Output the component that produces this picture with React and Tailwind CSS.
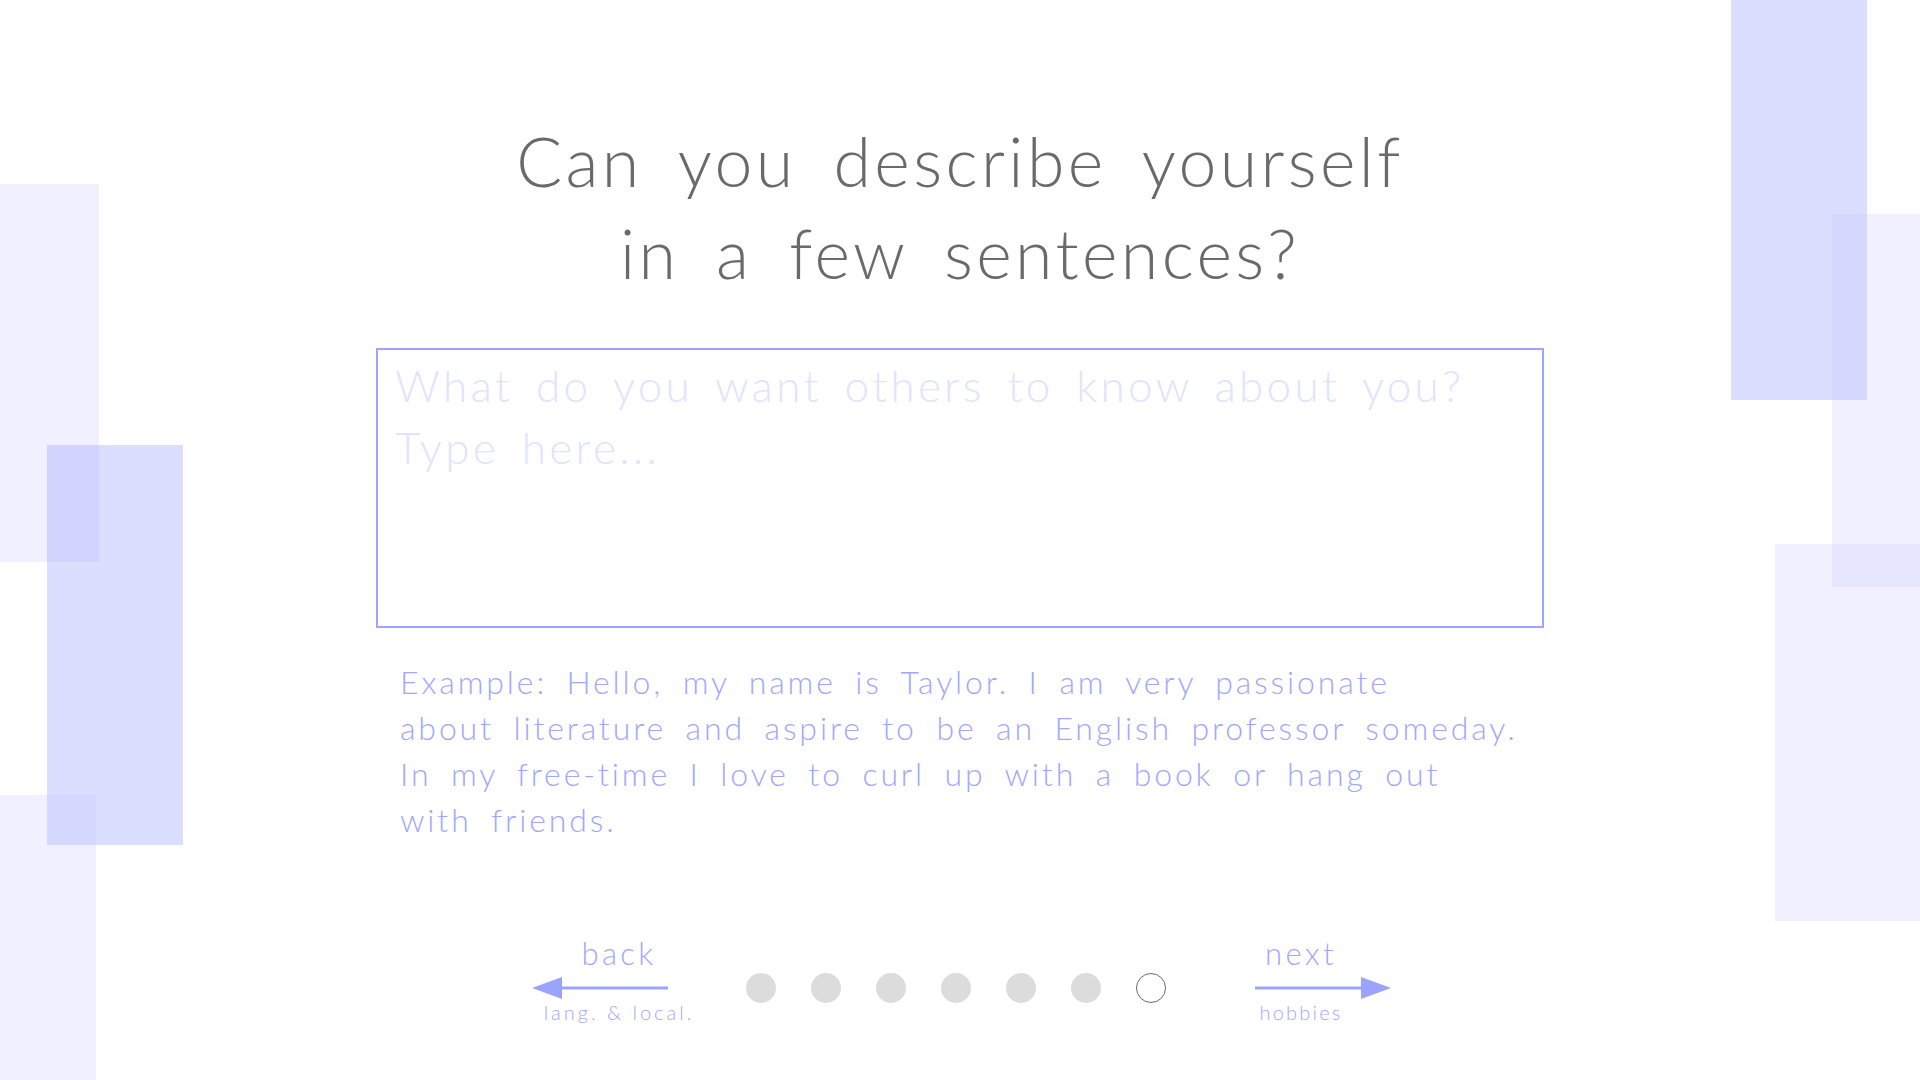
import React from 'react';

const dots = [0, 1, 2, 3, 4, 5];

const BackArrow = () => (
    <svg width="136" height="22" viewBox="0 0 136 22" className="mr-[38px]">
        <line x1="26" y1="11" x2="136" y2="11" stroke="#9ba3ff" strokeWidth="3" />
        <polygon points="0,11 30,0 30,22" fill="#9ba3ff" />
    </svg>
);

const NextArrow = () => (
    <svg width="136" height="22" viewBox="0 0 136 22" className="ml-[44px]">
        <line x1="0" y1="11" x2="110" y2="11" stroke="#9ba3ff" strokeWidth="3" />
        <polygon points="136,11 106,0 106,22" fill="#9ba3ff" />
    </svg>
);

export default function App() {
    return (
        <div className="relative w-full h-[1080px] overflow-hidden bg-white font-['Lato','Noto_Sans',sans-serif] font-light">
            {/* background blocks */}
            <div className="absolute left-0 top-[184px] w-[99px] h-[378px] bg-[rgba(200,200,250,0.28)]" />
            <div className="absolute left-[47px] top-[445px] w-[136px] h-[400px] bg-[rgba(155,166,255,0.37)]" />
            <div className="absolute left-0 top-[795px] w-[96px] h-[285px] bg-[rgba(200,200,250,0.28)]" />
            <div className="absolute left-[1731px] top-0 w-[136px] h-[400px] bg-[rgba(155,166,255,0.37)]" />
            <div className="absolute left-[1832px] top-[214px] w-[88px] h-[373px] bg-[rgba(200,200,250,0.28)]" />
            <div className="absolute left-[1775px] top-[544px] w-[145px] h-[377px] bg-[rgba(200,200,250,0.28)]" />

            <div className="relative flex flex-col items-center pt-[115px]">
                <h1 className="text-center text-[68px] leading-[92px] text-[#6a6a6a] tracking-[0.05em] [word-spacing:0.22em]">
                    Can you describe yourself
                    <br />
                    in a few sentences?
                </h1>

                <div className="mt-[49px] w-[1168px]">
                    <textarea
                        className="block w-full h-[280px] resize-none border-2 border-[#9ea4ff] bg-transparent pt-[4px] pl-[17px] pr-4 text-[44px] leading-[62px] tracking-[0.075em] [word-spacing:0.17em] text-[#9ea4ff] outline-none placeholder:text-[#e2e3fc]"
                        placeholder={'What do you want others to know about you?\nType here...'}
                    />
                    <p className="mt-[31px] pl-[24px] text-[32px] leading-[46px] tracking-[0.09em] [word-spacing:0.25em] text-[#a0a7ff] whitespace-nowrap">
                        Example: Hello, my name is Taylor. I am very passionate
                        <br />
                        about literature and aspire to be an English professor someday.
                        <br />
                        In my free-time I love to curl up with a book or hang out
                        <br />
                        with friends.
                    </p>
                </div>

                <div className="mt-[93px] flex items-start">
                    <button className="flex w-[150px] flex-col items-center text-[#a0a7ff]">
                        <span className="text-[31px] leading-[34px] tracking-[0.11em]">back</span>
                        <span className="mt-[7px]"><BackArrow /></span>
                        <span className="mt-[2px] text-[20px] leading-[22px] tracking-[0.15em] whitespace-nowrap">lang. &amp; local.</span>
                    </button>

                    <div className="ml-[52px] mt-[37px] flex gap-[35px]">
                        {dots.map((d) => (
                            <span key={d} className="h-[30px] w-[30px] rounded-full bg-[#dcdcdc]" />
                        ))}
                        <span className="h-[30px] w-[30px] rounded-full border border-[#6b6b6b] bg-white" />
                    </div>

                    <button className="ml-[60px] flex w-[150px] flex-col items-center text-[#a0a7ff]">
                        <span className="text-[31px] leading-[34px] tracking-[0.11em]">next</span>
                        <span className="mt-[7px]"><NextArrow /></span>
                        <span className="mt-[2px] text-[20px] leading-[22px] tracking-[0.11em]">hobbies</span>
                    </button>
                </div>
            </div>
        </div>
    );
}
